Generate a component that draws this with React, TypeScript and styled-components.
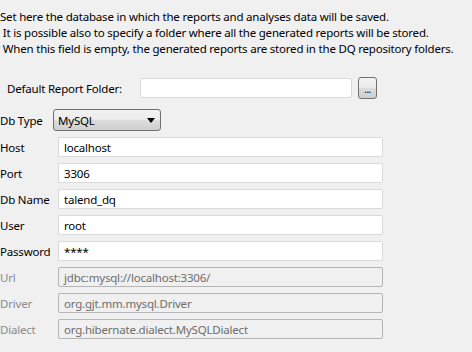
import React from "react";
import styled, { createGlobalStyle } from "styled-components";

const Global = createGlobalStyle`
  html, body { margin: 0; padding: 0; background: #f0f0f0; }
  body { font-family: "Noto Sans", "Open Sans", sans-serif; font-size: 11.5px; letter-spacing: -0.2px; color: #000; }
`;

const Page = styled.div`
  width: 472px;
  height: 352px;
  background: #f0f0f0;
  padding-top: 9px;
  box-sizing: border-box;
  display: flex;
  flex-direction: column;
`;

const Description = styled.div`
  white-space: pre;
  line-height: 16px;
`;

const FolderRow = styled.div`
  display: flex;
  align-items: center;
  margin-top: 20px;
  padding-left: 7px;
  height: 22px;
`;

const FolderLabel = styled.span`
  width: 133px;
  flex: none;
`;

const TextField = styled.div<{ $width: number; $disabled?: boolean }>`
  box-sizing: border-box;
  width: ${(p) => p.$width}px;
  height: 20px;
  border: 1px solid ${(p) => (p.$disabled ? "#b5b5b5" : "#dadada")};
  border-radius: 2px;
  background: ${(p) => (p.$disabled ? "#f0f0f0" : "#ffffff")};
  color: ${(p) => (p.$disabled ? "#6d6d6d" : "#000")};
  padding-left: 5px;
  display: flex;
  align-items: center;
  flex: none;
`;

const BrowseButton = styled.div`
  box-sizing: border-box;
  width: 19px;
  height: 22px;
  margin-left: 6px;
  border: 1px solid #707070;
  border-radius: 3px;
  background: linear-gradient(#f3f3f3 0%, #ebebeb 50%, #dddddd 51%, #cfcfcf 100%);
  display: flex;
  align-items: flex-end;
  justify-content: center;
  padding-bottom: 5px;
  font-size: 10px;
  line-height: 8px;
  letter-spacing: -0.5px;
`;

const DbTypeRow = styled.div`
  display: flex;
  align-items: center;
  margin-top: 10px;
  height: 22px;
`;

const DbTypeLabel = styled.span`
  width: 53px;
  flex: none;
`;

const Select = styled.div`
  box-sizing: border-box;
  width: 108px;
  height: 22px;
  border: 1px solid #707070;
  border-radius: 3px;
  background: linear-gradient(#f2f2f2 0%, #ebebeb 50%, #dddddd 51%, #cfcfcf 100%);
  display: flex;
  align-items: center;
  justify-content: space-between;
  padding: 0 5px 0 4px;
`;

const Arrow = styled.svg`
  width: 8px;
  height: 5px;
`;

const Fields = styled.div`
  display: grid;
  grid-template-columns: 58px 325px;
  row-gap: 6px;
  margin-top: 6px;
  align-items: center;
`;

const Label = styled.span<{ $disabled?: boolean }>`
  color: ${(p) => (p.$disabled ? "#8a8a8a" : "#000")};
`;

const rows = [
  { label: "Host", value: "localhost" },
  { label: "Port", value: "3306" },
  { label: "Db Name", value: "talend_dq" },
  { label: "User", value: "root" },
  { label: "Password", value: "****" },
  { label: "Url", value: "jdbc:mysql://localhost:3306/", disabled: true },
  { label: "Driver", value: "org.gjt.mm.mysql.Driver", disabled: true },
  { label: "Dialect", value: "org.hibernate.dialect.MySQLDialect", disabled: true },
];

export default function App() {
  return (
    <>
      <Global />
      <Page>
        <Description>
          {"Set here the database in which the reports and analyses data will be saved.\n It is possible also to specify a folder where all the generated reports will be stored.\n When this field is empty, the generated reports are stored in the DQ repository folders."}
        </Description>
        <FolderRow>
          <FolderLabel>Default Report Folder:</FolderLabel>
          <TextField $width={212} />
          <BrowseButton>...</BrowseButton>
        </FolderRow>
        <DbTypeRow>
          <DbTypeLabel>Db Type</DbTypeLabel>
          <Select>
            <span>MySQL</span>
            <Arrow viewBox="0 0 8 5">
              <path d="M0 0 H8 L4 5 Z" fill="#000" />
            </Arrow>
          </Select>
        </DbTypeRow>
        <Fields>
          {rows.map((r) => (
            <React.Fragment key={r.label}>
              <Label $disabled={r.disabled}>{r.label}</Label>
              <TextField $width={325} $disabled={r.disabled}>
                {r.value}
              </TextField>
            </React.Fragment>
          ))}
        </Fields>
      </Page>
    </>
  );
}
